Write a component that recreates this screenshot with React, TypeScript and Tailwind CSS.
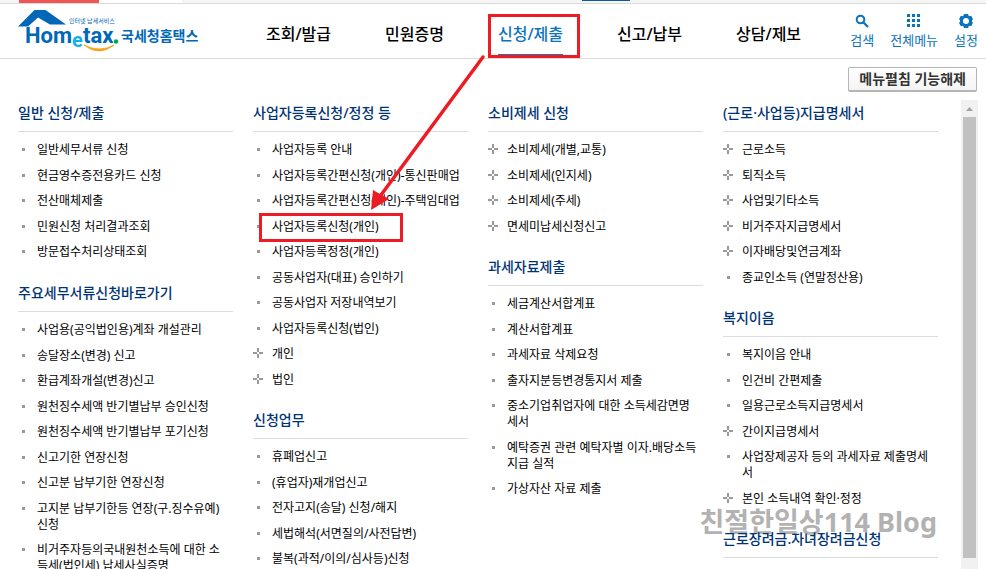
import clsx from "clsx";

type MenuItem = {
  label: string;
  expandable?: boolean;
  marked?: boolean;
};

type MenuSection = {
  title: string;
  items: MenuItem[];
};

const navItems = ["조회/발급", "민원증명", "신청/제출", "신고/납부", "상담/제보"];
const activeNav = "신청/제출";

const columns: MenuSection[][] = [
  [
    {
      title: "일반 신청/제출",
      items: [
        { label: "일반세무서류 신청" },
        { label: "현금영수증전용카드 신청" },
        { label: "전산매체제출" },
        { label: "민원신청 처리결과조회" },
        { label: "방문접수처리상태조회" },
      ],
    },
    {
      title: "주요세무서류신청바로가기",
      items: [
        { label: "사업용(공익법인용)계좌 개설관리" },
        { label: "송달장소(변경) 신고" },
        { label: "환급계좌개설(변경)신고" },
        { label: "원천징수세액 반기별납부 승인신청" },
        { label: "원천징수세액 반기별납부 포기신청" },
        { label: "신고기한 연장신청" },
        { label: "신고분 납부기한 연장신청" },
        { label: "고지분 납부기한등 연장(구.징수유예) 신청" },
        { label: "비거주자등의국내원천소득에 대한 소득세(법인세) 납세사실증명" },
      ],
    },
  ],
  [
    {
      title: "사업자등록신청/정정 등",
      items: [
        { label: "사업자등록 안내" },
        { label: "사업자등록간편신청(개인)-통신판매업" },
        { label: "사업자등록간편신청(개인)-주택임대업" },
        { label: "사업자등록신청(개인)", marked: true },
        { label: "사업자등록정정(개인)" },
        { label: "공동사업자(대표) 승인하기" },
        { label: "공동사업자 저장내역보기" },
        { label: "사업자등록신청(법인)" },
        { label: "개인", expandable: true },
        { label: "법인", expandable: true },
      ],
    },
    {
      title: "신청업무",
      items: [
        { label: "휴폐업신고" },
        { label: "(휴업자)재개업신고" },
        { label: "전자고지(송달) 신청/해지" },
        { label: "세법해석(서면질의/사전답변)" },
        { label: "불복(과적/이의/심사등)신청" },
      ],
    },
  ],
  [
    {
      title: "소비제세 신청",
      items: [
        { label: "소비제세(개별,교통)", expandable: true },
        { label: "소비제세(인지세)", expandable: true },
        { label: "소비제세(주세)", expandable: true },
        { label: "면세미납세신청신고", expandable: true },
      ],
    },
    {
      title: "과세자료제출",
      items: [
        { label: "세금계산서합계표" },
        { label: "계산서합계표" },
        { label: "과세자료 삭제요청" },
        { label: "출자지분등변경통지서 제출" },
        { label: "중소기업취업자에 대한 소득세감면명세서" },
        { label: "예탁증권 관련 예탁자별 이자.배당소득 지급 실적" },
        { label: "가상자산 자료 제출" },
      ],
    },
  ],
  [
    {
      title: "(근로·사업등)지급명세서",
      items: [
        { label: "근로소득", expandable: true },
        { label: "퇴직소득", expandable: true },
        { label: "사업및기타소득", expandable: true },
        { label: "비거주자지급명세서", expandable: true },
        { label: "이자배당및연금계좌", expandable: true },
        { label: "종교인소득 (연말정산용)" },
      ],
    },
    {
      title: "복지이음",
      items: [
        { label: "복지이음 안내" },
        { label: "인건비 간편제출" },
        { label: "일용근로소득지급명세서" },
        { label: "간이지급명세서", expandable: true },
        { label: "사업장제공자 등의 과세자료 제출명세서" },
        { label: "본인 소득내역 확인·정정", expandable: true },
      ],
    },
    { title: "근로장려금.자녀장려금신청", items: [] },
  ],
];

const Logo = () => (
  <svg width="182" height="46" viewBox="17 9 182 46" role="img" aria-label="Hometax 국세청홈택스">
    <path d="M18 27.5 34.5 11H45.5L66 25.5H50L38 18.5 28 27.5Z" fill="#0068b7" />
    <g className="font-['Roboto',sans-serif] font-bold" fill="#0068b7">
      <text x="25" y="44" fontSize="22">Hom</text>
      <text x="72" y="48" fontSize="20" fill="#14b1e7">e</text>
      <text x="83" y="44" fontSize="22">tax</text>
    </g>
    <circle cx="116" cy="42.5" r="2.2" fill="#00a651" />
    <path d="M84 46Q99 58 114 46Q100 54 84 46Z" fill="#f7a11a" stroke="#f7a11a" strokeWidth="0.8" />
    <text x="69" y="24" fontSize="6" fill="#0068b7">인터넷 납세서비스</text>
    <text x="121" y="42" fontSize="14" fontWeight="700" fill="#0068b7">국세청홈택스</text>
  </svg>
);

const SearchIcon = () => (
  <svg width="14" height="14" viewBox="0 0 14 14" fill="none" stroke="#0b73bd" aria-hidden="true">
    <circle cx="5.500" cy="5.500" r="3.800" strokeWidth="2" />
    <path d="M8.500 8.500 13 13" strokeWidth="2.300" />
  </svg>
);

const GridIcon = () => (
  <svg width="14" height="14" viewBox="0 0 14 14" fill="#0b73bd" aria-hidden="true">
    <path d="M0 0h3v3H0zM5 0h3v3H5zM10 0h3v3h-3zM0 5h3v3H0zM5 5h3v3H5zM10 5h3v3h-3zM0 10h3v3H0zM5 10h3v3H5zM10 10h3v3h-3z" />
  </svg>
);

const GearIcon = () => (
  <svg width="14" height="14" viewBox="0 0 14 14" fill="#0b73bd" aria-hidden="true">
    <path
      fillRule="evenodd"
      d="M5 0h4l.5 1.500 1.200.7 1.500-.4L14 5.200 13 6.300v1.400l1 1.100-1.800 3.400-1.500-.4-1.200.7L9 14H5l-.5-1.500-1.200-.7-1.500.4L0 8.800l1-1.100V6.300L0 5.200l1.800-3.400 1.500.4 1.200-.7ZM7 4a3 3 0 1 0 0 6 3 3 0 0 0 0-6Z"
    />
  </svg>
);

const PlusMark = () => (
  <svg width="10" height="10" viewBox="0 0 10 10" fill="#999" aria-hidden="true">
    <path d="M4 0h2v4H4zM4 6h2v4H4zM0 4h4v2H0zM6 4h4v2H6z" />
  </svg>
);

const utilities = [
  { label: "검색", icon: <SearchIcon /> },
  { label: "전체메뉴", icon: <GridIcon /> },
  { label: "설정", icon: <GearIcon /> },
];

const Section = ({ title, items }: MenuSection) => (
  <section>
    <h2 className="border-b border-[#dcdcdc] pb-2 text-sm/5 font-medium text-[#003375]">{title}</h2>
    <ul className="pt-[10px] text-xs/4 text-black">
      {items.map((item) => (
        <li key={item.label} className="relative flex pb-[10px] even:pb-[9px]">
          <span className="flex h-[14px] w-[19px] shrink-0 items-center">
            {item.expandable ? <PlusMark /> : <span className="ml-1 size-[3px] bg-[#999]" />}
          </span>
          <a href="#" className="pr-1">{item.label}</a>
          {item.marked && (
            <span className="pointer-events-none absolute -top-[6px] left-[6px] h-[29px] w-[144px] border-3 border-[#ed1c24]" />
          )}
        </li>
      ))}
    </ul>
  </section>
);

const App = () => {
  return (
    <div className="relative flex h-screen flex-col overflow-hidden bg-white font-['Noto_Sans','Noto_Sans_CJK_KR',sans-serif]">
      {/* Browser tab strip */}
      <div className="flex h-1 shrink-0 justify-between border-b border-[#d9d9d9] bg-[#f5f5f5] pl-[19px]">
        <div className="flex">
          <span className="w-20 bg-[#ee5555]" />
          <span className="w-[83px] bg-white" />
        </div>
        <span className="mr-[356px] h-px w-12 bg-[#10599a]" />
      </div>

      <header className="flex h-[55px] shrink-0 items-center border-b border-[#dedede] pr-2 pl-[17px]">
        <a href="#" className="shrink-0">
          <Logo />
        </a>
        <nav className="ml-[67px] flex h-full gap-[54px] text-base">
          {navItems.map((item) => (
            <button
              key={item}
              className={clsx(
                "relative border-b-4 pt-[10px] font-medium whitespace-nowrap",
                item === activeNav ? "border-[#2a6fae] text-[#0b73bd]" : "border-transparent text-black"
              )}
            >
              {item}
              {item === activeNav && (
                <span className="pointer-events-none absolute top-[10px] -right-[17px] -bottom-1 -left-[10px] border-3 border-[#ed1c24]" />
              )}
            </button>
          ))}
        </nav>
        <div className="ml-auto flex gap-4">
          {utilities.map(({ label, icon }) => (
            <button key={label} className="flex flex-col items-center gap-1 text-[13px]/4 whitespace-nowrap text-[#0b73bd]">
              {icon}
              {label}
            </button>
          ))}
        </div>
      </header>

      <div className="flex shrink-0 justify-end pt-2 pr-[9px] pb-2">
        <button className="h-[25px] rounded-xs border border-b-2 border-[#b5b5b5] bg-linear-to-b from-white to-[#f4f4f4] px-[10px] text-sm/5 font-bold text-[#333]">
          메뉴펼침 기능해제
        </button>
      </div>

      <main className="flex min-h-0 flex-1 pr-2 pl-[18px]">
        <div className="relative z-10 mr-[23px] grid flex-1 grid-cols-4 gap-5 overflow-hidden pt-[3px]">
          {columns.map((sections) => (
            <div key={sections[0].title} className="flex flex-col gap-[13px]">
              {sections.map((section) => (
                <Section key={section.title} {...section} />
              ))}
            </div>
          ))}
        </div>
        <div className="flex w-[17px] flex-col items-center bg-[#f1f1f1] pb-[11px]">
          <svg width="17" height="17" viewBox="0 0 17 17" fill="#a3a3a3" className="shrink-0" aria-hidden="true">
            <path d="M5 11 8.500 7 12 11Z" />
          </svg>
          <span className="w-[13px] flex-1 bg-[#c1c1c1]" />
        </div>
      </main>

      <p className="absolute right-[49px] bottom-[31px] text-[27px]/8 font-bold text-[#b2b2b2]">친절한일상114 Blog</p>

      {/* Arrow from the open tab to the marked entry */}
      <svg width="116" height="158" viewBox="0 0 116 158" className="pointer-events-none absolute top-[54px] left-[370px] z-20" aria-hidden="true">
        <path d="M113 3 11 141" stroke="#ed1c24" strokeWidth="3.500" strokeLinecap="round" />
        <path d="M1 156 3 136 19 145Z" fill="#ed1c24" />
      </svg>
    </div>
  );
};

export default App;
